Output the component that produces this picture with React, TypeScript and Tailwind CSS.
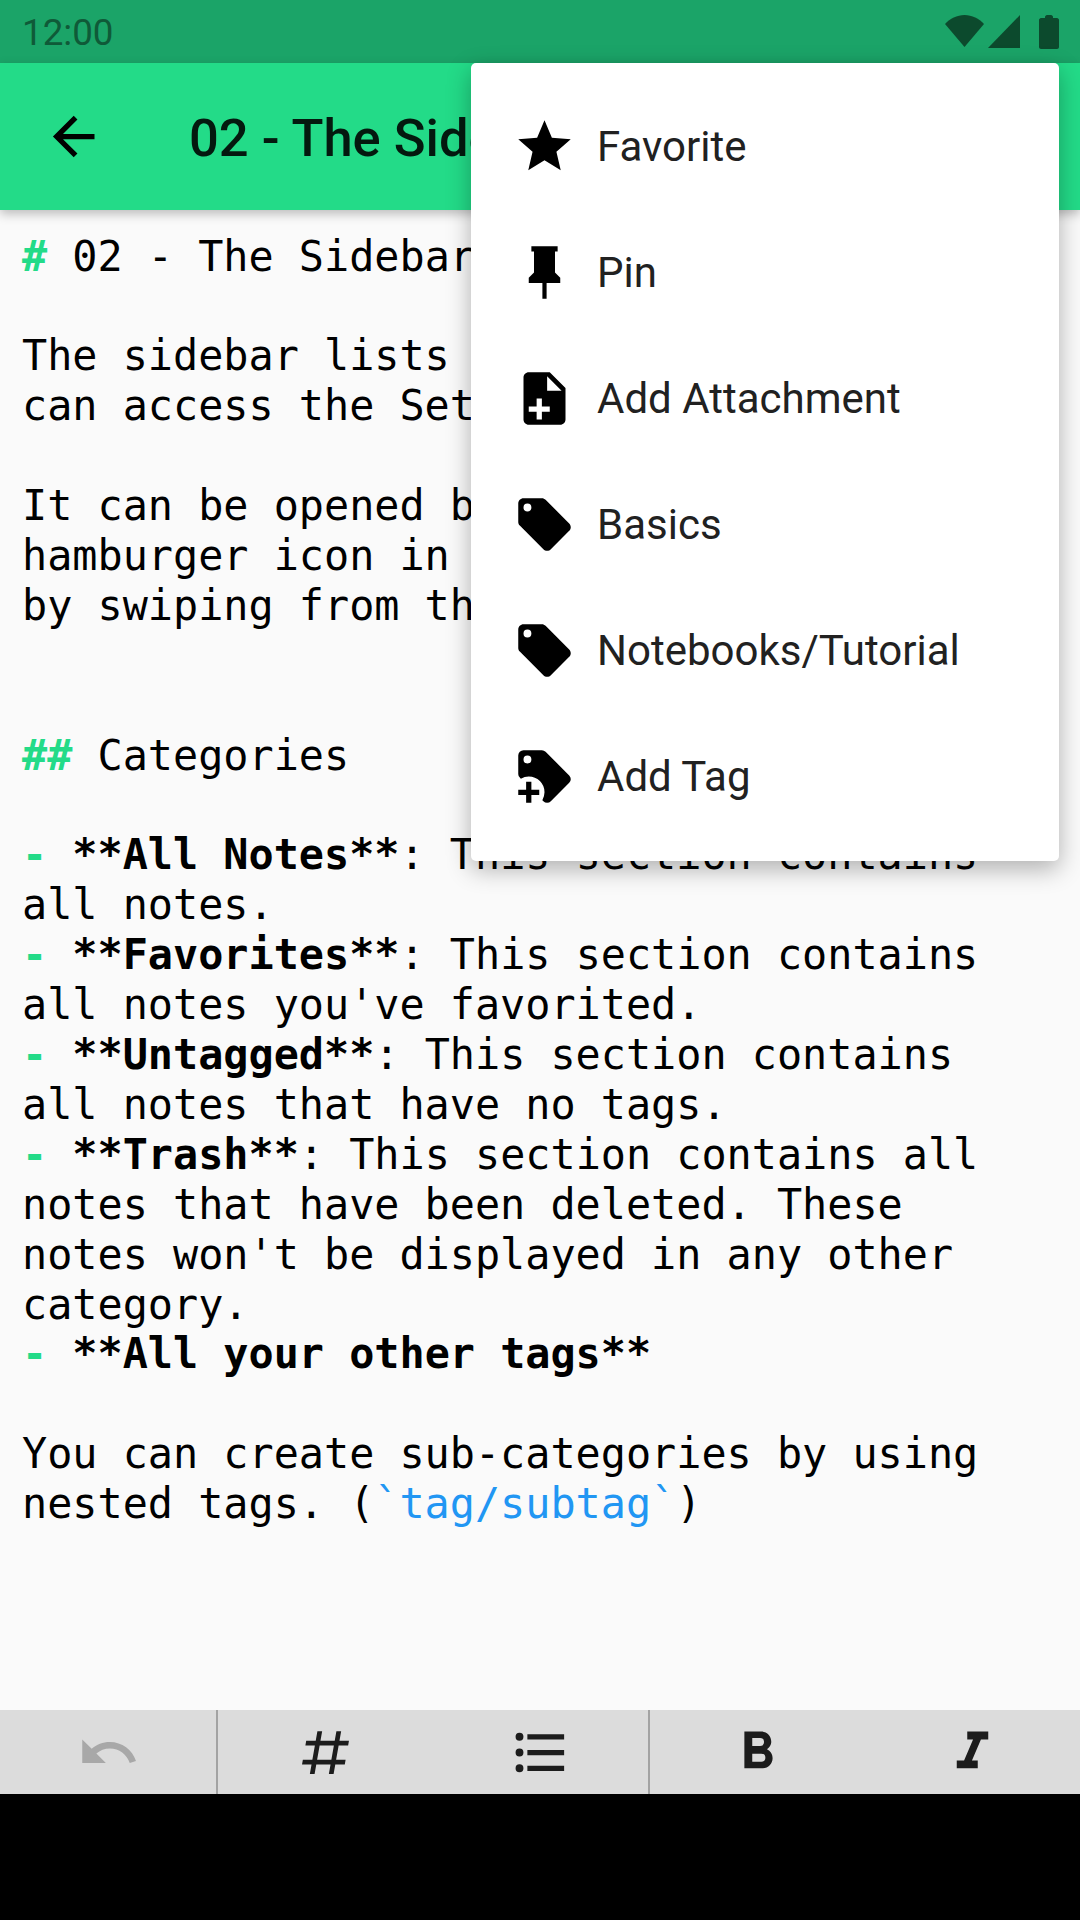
import React from "react";

const P = {
  back: "M20,11V13H8L13.5,18.5L12.08,19.92L4.16,12L12.08,4.08L13.5,5.5L8,11H20Z",
  star: "M12,17.27L18.18,21L16.54,13.97L22,9.24L14.81,8.62L12,2L9.19,8.62L2,9.24L7.45,13.97L5.82,21L12,17.27Z",
  pin: "M16,12V4H17V2H7V4H8V12L6,14V16H11.2V22H12.8V16H18V14L16,12Z",
  file: "M14 2H6C4.9 2 4 2.9 4 4V20C4 21.1 4.9 22 6 22H18C19.1 22 20 21.1 20 20V8L14 2M13 9V3.5L18.5 9H13M14 15H11V12H9V15H6V17H9V20H11V17H14V15Z",
  tag: "M5.5,7A1.5,1.5 0 0,1 4,5.5A1.5,1.5 0 0,1 5.5,4A1.5,1.5 0 0,1 7,5.5A1.5,1.5 0 0,1 5.5,7M21.41,11.58L12.41,2.58C12.05,2.22 11.55,2 11,2H4C2.89,2 2,2.89 2,4V11C2,11.55 2.22,12.05 2.59,12.41L11.58,21.41C11.95,21.77 12.45,22 13,22C13.55,22 14.05,21.77 14.41,21.41L21.41,14.41C21.78,14.05 22,13.55 22,13C22,12.44 21.77,11.94 21.41,11.58Z",
  tagPlus: "M21.41 11.58L12.41 2.58A2 2 0 0 0 11 2H4A2 2 0 0 0 2 4V11A2 2 0 0 0 2.59 12.42L3 12.82A6 6 0 0 1 6 12A6 6 0 0 1 12 18A6 6 0 0 1 11.18 21L11.58 21.4A2 2 0 0 0 13 22A2 2 0 0 0 14.41 21.41L21.41 14.41A2 2 0 0 0 22 13A2 2 0 0 0 21.41 11.58M5.5 7A1.5 1.5 0 1 1 7 5.5A1.5 1.5 0 0 1 5.5 7M10 19H7V22H5V19H2V17H5V14H7V17H10Z",
  undo: "M12.5,8C9.85,8 7.45,9 5.6,10.6L2,7V16H11L7.38,12.38C8.77,11.22 10.54,10.5 12.5,10.5C16.04,10.5 19.05,12.81 20.1,16L22.47,15.22C21.08,11.03 17.15,8 12.5,8Z",
  pound: "M5.41,21L6.12,17H2.12L2.47,15H6.47L7.53,9H3.53L3.88,7H7.88L8.59,3H10.59L9.88,7H15.88L16.59,3H18.59L17.88,7H21.88L21.53,9H17.53L16.47,15H20.47L20.12,17H16.12L15.41,21H13.41L14.12,17H8.12L7.41,21H5.41M9.53,9L8.47,15H14.47L15.53,9H9.53Z",
  list: "M7,5H21V7H7V5M7,13V11H21V13H7M4,4.5A1.5,1.5 0 0,1 5.5,6A1.5,1.5 0 0,1 4,7.5A1.5,1.5 0 0,1 2.5,6A1.5,1.5 0 0,1 4,4.5M4,10.5A1.5,1.5 0 0,1 5.5,12A1.5,1.5 0 0,1 4,13.5A1.5,1.5 0 0,1 2.5,12A1.5,1.5 0 0,1 4,10.5M7,19V17H21V19H7M4,16.5A1.5,1.5 0 0,1 5.5,18A1.5,1.5 0 0,1 4,19.5A1.5,1.5 0 0,1 2.5,18A1.5,1.5 0 0,1 4,16.5Z",
  bold: "M13.5,15.5H10V12.5H13.5A1.5,1.5 0 0,1 15,14A1.5,1.5 0 0,1 13.5,15.5M10,6.5H13A1.5,1.5 0 0,1 14.5,8A1.5,1.5 0 0,1 13,9.5H10M15.6,10.79C16.57,10.11 17.25,9 17.25,8C17.25,5.74 15.5,4 13.25,4H7V18H14.04C16.14,18 17.75,16.3 17.75,14.21C17.75,12.69 16.89,11.39 15.6,10.79Z",
  italic: "M10,4V7H12.21L8.79,15H6V18H14V15H11.79L15.21,7H18V4H10Z",
};

function Icon({ d, className }: { d: string; className: string }) {
  return (
    <svg viewBox="0 0 24 24" className={className} fill="currentColor">
      <path d={d} fillRule="evenodd" />
    </svg>
  );
}

function G({ children }: { children: React.ReactNode }) {
  return <span className="font-bold text-[#23db88]">{children}</span>;
}
function B({ children }: { children: React.ReactNode }) {
  return <span className="font-bold">{children}</span>;
}

const menu = [
  { icon: P.star, label: "Favorite" },
  { icon: P.pin, label: "Pin" },
  { icon: P.file, label: "Add Attachment" },
  { icon: P.tag, label: "Basics" },
  { icon: P.tag, label: "Notebooks/Tutorial" },
  { icon: P.tagPlus, label: "Add Tag" },
];

export default function App() {
  return (
    <div className="relative flex h-[1920px] w-[1080px] flex-col overflow-hidden bg-[#fafafa] font-['Roboto',sans-serif]">
      <div className="flex h-[63px] shrink-0 items-center justify-between bg-[#1ba468] pl-[22px] pr-[21px] text-[#0c4a2d]">
        <span className="pt-[4px] text-[36.75px] leading-none text-[#0f5a38]">12:00</span>
        <div className="flex items-start gap-[4px] pt-px">
          <svg width="39" height="33" viewBox="0 0 39 33" fill="currentColor">
            <path d="M19.5 32L0 9C5 3.5 12 0 19.5 0C27 0 34 3.5 39 9Z" />
          </svg>
          <svg width="32" height="33" viewBox="0 0 32 33" fill="currentColor" className="mr-[15px]">
            <path d="M32 0V33H0Z" />
          </svg>
          <svg width="20" height="34" viewBox="0 0 20 34" fill="currentColor">
            <path d="M6 2C6 1 7 0 8 0H12C13 0 14 1 14 2V3H18C19 3 20 4 20 5V32C20 33 19 34 18 34H2C1 34 0 33 0 32V5C0 4 1 3 2 3H6Z" />
          </svg>
        </div>
      </div>

      <div className="z-10 flex h-[147px] shrink-0 items-center bg-[#23db88] pl-[42px] shadow-[0_4px_10px_rgba(0,0,0,0.25)]">
        <Icon d={P.back} className="h-[63px] w-[63px] text-black" />
        <span className="ml-[84px] pt-[3px] text-[52.5px] font-medium text-[#04190f]">02 - The Sidebar</span>
      </div>

      <div className="flex-1 overflow-hidden whitespace-pre pl-[22px] pt-[21.5px] font-['DejaVu_Sans_Mono',monospace] text-[41.8px] leading-[49.9px] text-black">
        <G>#</G>{` 02 - The Sidebar

The sidebar lists all your notes. You
can access the Settings from it too.

It can be opened by tapping on the
hamburger icon in the toolbar, or
by swiping from the left edge.


`}<G>##</G>{` Categories

`}<G>-</G> <B>**All Notes**</B>{`: This section contains
all notes.
`}<G>-</G> <B>**Favorites**</B>{`: This section contains
all notes you've favorited.
`}<G>-</G> <B>**Untagged**</B>{`: This section contains
all notes that have no tags.
`}<G>-</G> <B>**Trash**</B>{`: This section contains all
notes that have been deleted. These
notes won't be displayed in any other
category.
`}<G>-</G> <B>**All your other tags**</B>{`

You can create sub-categories by using
nested tags. (`}<span className="text-[#2196f3]">`tag/subtag`</span>)
      </div>

      <div className="flex h-[84px] shrink-0 bg-[#dcdcdc]">
        <div className="flex w-[216px] items-center justify-center text-[#a8a8a8]">
          <Icon d={P.undo} className="h-[63px] w-[63px]" />
        </div>
        <div className="flex w-[216px] items-center justify-center border-l-[2px] border-[#a3a3a3] text-[#1c1c1c]">
          <Icon d={P.pound} className="h-[57px] w-[57px]" />
        </div>
        <div className="flex w-[216px] items-center justify-center text-[#1c1c1c]">
          <Icon d={P.list} className="h-[63px] w-[63px]" />
        </div>
        <div className="flex w-[216px] items-center justify-center border-l-[2px] border-[#a3a3a3] text-[#1c1c1c]">
          <Icon d={P.bold} className="h-[63px] w-[63px]" />
        </div>
        <div className="flex w-[216px] items-center justify-center text-[#1c1c1c]">
          <Icon d={P.italic} className="h-[63px] w-[63px]" />
        </div>
      </div>

      <div className="h-[126px] shrink-0 bg-black" />

      <div className="absolute left-[471px] top-[63px] z-20 w-[588px] rounded-[5px] bg-white pb-[22px] pt-[20px] shadow-[0_8px_24px_rgba(0,0,0,0.3)]">
        {menu.map((m) => (
          <div key={m.label} className="flex h-[126px] items-center pl-[42px]">
            <Icon d={m.icon} className="h-[63px] w-[63px] text-black" />
            <span className="ml-[21px] text-[42px] text-[#212121]">{m.label}</span>
          </div>
        ))}
      </div>
    </div>
  );
}
